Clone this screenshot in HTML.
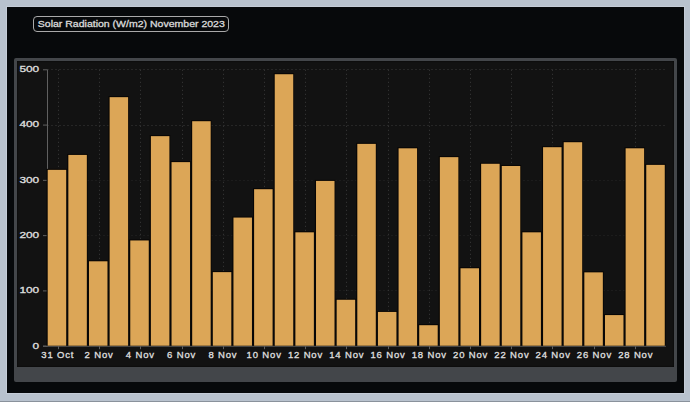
<!DOCTYPE html>
<html><head><meta charset="utf-8"><style>
html,body{margin:0;padding:0;}
body{width:690px;height:402px;background:#b8c2ce;position:relative;overflow:hidden;font-family:"Liberation Sans",sans-serif;}
.frame{position:absolute;left:7px;top:7px;width:677px;height:386px;background:#07090b;box-shadow:0 0 0 1px #c4ccd7;}
.bot{position:absolute;left:0;top:401px;width:690px;height:1px;background:#8a929c;}
.title{position:absolute;left:33px;top:16px;width:194px;height:14px;border:1px solid #a9a9a9;border-radius:4px;}
.panel{position:absolute;left:14px;top:58px;width:657px;height:306px;border:3px solid #43464a;border-bottom-width:15px;border-radius:2px;background:#121212;box-shadow:inset 0 0 2px #000;}
svg{position:absolute;left:0;top:0;}
</style></head><body>
<div class="frame"></div><div class="bot"></div>
<div class="title"></div>
<div class="panel"></div>
<svg width="690" height="402" viewBox="0 0 690 402">
<g stroke="#3a3a3a" stroke-width="1" stroke-dasharray="1 3"><line x1="47.5" y1="290.50" x2="664.5" y2="290.50" stroke="#262626"/><line x1="47.5" y1="235.50" x2="664.5" y2="235.50" stroke="#262626"/><line x1="47.5" y1="180.50" x2="664.5" y2="180.50" stroke="#262626"/><line x1="47.5" y1="125.50" x2="664.5" y2="125.50" stroke="#3a3a3a"/><line x1="47.5" y1="69.50" x2="664.5" y2="69.50" stroke="#3a3a3a"/><line x1="58.50" y1="69.80" x2="58.50" y2="346.20"/><line x1="99.50" y1="69.80" x2="99.50" y2="346.20"/><line x1="140.50" y1="69.80" x2="140.50" y2="346.20"/><line x1="182.50" y1="69.80" x2="182.50" y2="346.20"/><line x1="223.50" y1="69.80" x2="223.50" y2="346.20"/><line x1="264.50" y1="69.80" x2="264.50" y2="346.20"/><line x1="305.50" y1="69.80" x2="305.50" y2="346.20"/><line x1="346.50" y1="69.80" x2="346.50" y2="346.20"/><line x1="388.50" y1="69.80" x2="388.50" y2="346.20"/><line x1="429.50" y1="69.80" x2="429.50" y2="346.20"/><line x1="470.50" y1="69.80" x2="470.50" y2="346.20"/><line x1="511.50" y1="69.80" x2="511.50" y2="346.20"/><line x1="552.50" y1="69.80" x2="552.50" y2="346.20"/><line x1="635.50" y1="69.80" x2="635.50" y2="346.20"/></g>
<g stroke="#606060" stroke-width="1"><line x1="47.5" y1="69.80" x2="47.5" y2="346.20"/><line x1="43.0" y1="346.20" x2="666.0" y2="346.20"/><line x1="43.0" y1="346.20" x2="47.5" y2="346.20"/><line x1="43.0" y1="290.92" x2="47.5" y2="290.92"/><line x1="43.0" y1="235.64" x2="47.5" y2="235.64"/><line x1="43.0" y1="180.36" x2="47.5" y2="180.36"/><line x1="43.0" y1="125.08" x2="47.5" y2="125.08"/><line x1="43.0" y1="69.80" x2="47.5" y2="69.80"/><line x1="58.50" y1="346.20" x2="58.50" y2="349.20"/><line x1="99.50" y1="346.20" x2="99.50" y2="349.20"/><line x1="140.50" y1="346.20" x2="140.50" y2="349.20"/><line x1="182.50" y1="346.20" x2="182.50" y2="349.20"/><line x1="223.50" y1="346.20" x2="223.50" y2="349.20"/><line x1="264.50" y1="346.20" x2="264.50" y2="349.20"/><line x1="305.50" y1="346.20" x2="305.50" y2="349.20"/><line x1="346.50" y1="346.20" x2="346.50" y2="349.20"/><line x1="388.50" y1="346.20" x2="388.50" y2="349.20"/><line x1="429.50" y1="346.20" x2="429.50" y2="349.20"/><line x1="470.50" y1="346.20" x2="470.50" y2="349.20"/><line x1="511.50" y1="346.20" x2="511.50" y2="349.20"/><line x1="552.50" y1="346.20" x2="552.50" y2="349.20"/><line x1="594.50" y1="346.20" x2="594.50" y2="349.20"/><line x1="635.50" y1="346.20" x2="635.50" y2="349.20"/></g>
<g fill="#070504"><rect x="46.60" y="168.86" width="20.4" height="176.84"/><rect x="67.24" y="153.93" width="20.4" height="191.77"/><rect x="87.88" y="260.29" width="20.4" height="85.41"/><rect x="108.52" y="96.16" width="20.4" height="249.54"/><rect x="129.16" y="239.45" width="20.4" height="106.25"/><rect x="149.80" y="135.14" width="20.4" height="210.56"/><rect x="170.44" y="161.12" width="20.4" height="184.58"/><rect x="191.08" y="120.21" width="20.4" height="225.49"/><rect x="211.72" y="271.12" width="20.4" height="74.58"/><rect x="232.36" y="216.56" width="20.4" height="129.14"/><rect x="253.00" y="188.20" width="20.4" height="157.50"/><rect x="273.64" y="73.22" width="20.4" height="272.48"/><rect x="294.28" y="231.32" width="20.4" height="114.38"/><rect x="314.92" y="179.91" width="20.4" height="165.79"/><rect x="335.56" y="298.76" width="20.4" height="46.94"/><rect x="356.20" y="142.88" width="20.4" height="202.82"/><rect x="376.84" y="310.93" width="20.4" height="34.77"/><rect x="397.48" y="147.30" width="20.4" height="198.40"/><rect x="418.12" y="324.19" width="20.4" height="21.51"/><rect x="438.76" y="156.14" width="20.4" height="189.56"/><rect x="459.40" y="267.26" width="20.4" height="78.44"/><rect x="480.04" y="162.78" width="20.4" height="182.92"/><rect x="500.68" y="164.99" width="20.4" height="180.71"/><rect x="521.32" y="231.32" width="20.4" height="114.38"/><rect x="541.96" y="146.19" width="20.4" height="199.51"/><rect x="562.60" y="141.22" width="20.4" height="204.48"/><rect x="583.24" y="271.35" width="20.4" height="74.35"/><rect x="603.88" y="314.08" width="20.4" height="31.62"/><rect x="624.52" y="147.30" width="20.4" height="198.40"/><rect x="645.16" y="163.88" width="20.4" height="181.82"/></g>
<g fill="#dca657"><rect x="47.70" y="169.86" width="18.5" height="175.84"/><rect x="68.34" y="154.93" width="18.5" height="190.77"/><rect x="88.98" y="261.29" width="18.5" height="84.41"/><rect x="109.62" y="97.16" width="18.5" height="248.54"/><rect x="130.26" y="240.45" width="18.5" height="105.25"/><rect x="150.90" y="136.14" width="18.5" height="209.56"/><rect x="171.54" y="162.12" width="18.5" height="183.58"/><rect x="192.18" y="121.21" width="18.5" height="224.49"/><rect x="212.82" y="272.12" width="18.5" height="73.58"/><rect x="233.46" y="217.56" width="18.5" height="128.14"/><rect x="254.10" y="189.20" width="18.5" height="156.50"/><rect x="274.74" y="74.22" width="18.5" height="271.48"/><rect x="295.38" y="232.32" width="18.5" height="113.38"/><rect x="316.02" y="180.91" width="18.5" height="164.79"/><rect x="336.66" y="299.76" width="18.5" height="45.94"/><rect x="357.30" y="143.88" width="18.5" height="201.82"/><rect x="377.94" y="311.93" width="18.5" height="33.77"/><rect x="398.58" y="148.30" width="18.5" height="197.40"/><rect x="419.22" y="325.19" width="18.5" height="20.51"/><rect x="439.86" y="157.14" width="18.5" height="188.56"/><rect x="460.50" y="268.26" width="18.5" height="77.44"/><rect x="481.14" y="163.78" width="18.5" height="181.92"/><rect x="501.78" y="165.99" width="18.5" height="179.71"/><rect x="522.42" y="232.32" width="18.5" height="113.38"/><rect x="543.06" y="147.19" width="18.5" height="198.51"/><rect x="563.70" y="142.22" width="18.5" height="203.48"/><rect x="584.34" y="272.35" width="18.5" height="73.35"/><rect x="604.98" y="315.08" width="18.5" height="30.62"/><rect x="625.62" y="148.30" width="18.5" height="197.40"/><rect x="646.26" y="164.88" width="18.5" height="180.82"/></g>
<g fill="#dcdcdc" stroke="#dcdcdc" stroke-width="0.35" font-family="Liberation Sans, sans-serif" font-size="9.5" font-weight="normal" letter-spacing="0.85"><text x="39.2" y="348.60" font-size="9.3" letter-spacing="0" text-anchor="end" textLength="6.6" lengthAdjust="spacingAndGlyphs">0</text><text x="39.2" y="293.32" font-size="9.3" letter-spacing="0" text-anchor="end" textLength="19.8" lengthAdjust="spacingAndGlyphs">100</text><text x="39.2" y="238.04" font-size="9.3" letter-spacing="0" text-anchor="end" textLength="19.8" lengthAdjust="spacingAndGlyphs">200</text><text x="39.2" y="182.76" font-size="9.3" letter-spacing="0" text-anchor="end" textLength="19.8" lengthAdjust="spacingAndGlyphs">300</text><text x="39.2" y="127.48" font-size="9.3" letter-spacing="0" text-anchor="end" textLength="19.8" lengthAdjust="spacingAndGlyphs">400</text><text x="39.2" y="72.20" font-size="9.3" letter-spacing="0" text-anchor="end" textLength="19.8" lengthAdjust="spacingAndGlyphs">500</text><text x="57.82" y="358.1" text-anchor="middle">31 Oct</text><text x="99.10" y="358.1" text-anchor="middle">2 Nov</text><text x="140.38" y="358.1" text-anchor="middle">4 Nov</text><text x="181.66" y="358.1" text-anchor="middle">6 Nov</text><text x="222.94" y="358.1" text-anchor="middle">8 Nov</text><text x="264.22" y="358.1" text-anchor="middle">10 Nov</text><text x="305.50" y="358.1" text-anchor="middle">12 Nov</text><text x="346.78" y="358.1" text-anchor="middle">14 Nov</text><text x="388.06" y="358.1" text-anchor="middle">16 Nov</text><text x="429.34" y="358.1" text-anchor="middle">18 Nov</text><text x="470.62" y="358.1" text-anchor="middle">20 Nov</text><text x="511.90" y="358.1" text-anchor="middle">22 Nov</text><text x="553.18" y="358.1" text-anchor="middle">24 Nov</text><text x="594.46" y="358.1" text-anchor="middle">26 Nov</text><text x="635.74" y="358.1" text-anchor="middle">28 Nov</text></g>
<text x="37.8" y="26.9" fill="#d8d8d8" stroke="#d8d8d8" stroke-width="0.3" font-family="Liberation Sans, sans-serif" font-size="8.3" font-weight="normal" textLength="187" lengthAdjust="spacingAndGlyphs">Solar Radiation (W/m2) November 2023</text>
</svg>
</body></html>
